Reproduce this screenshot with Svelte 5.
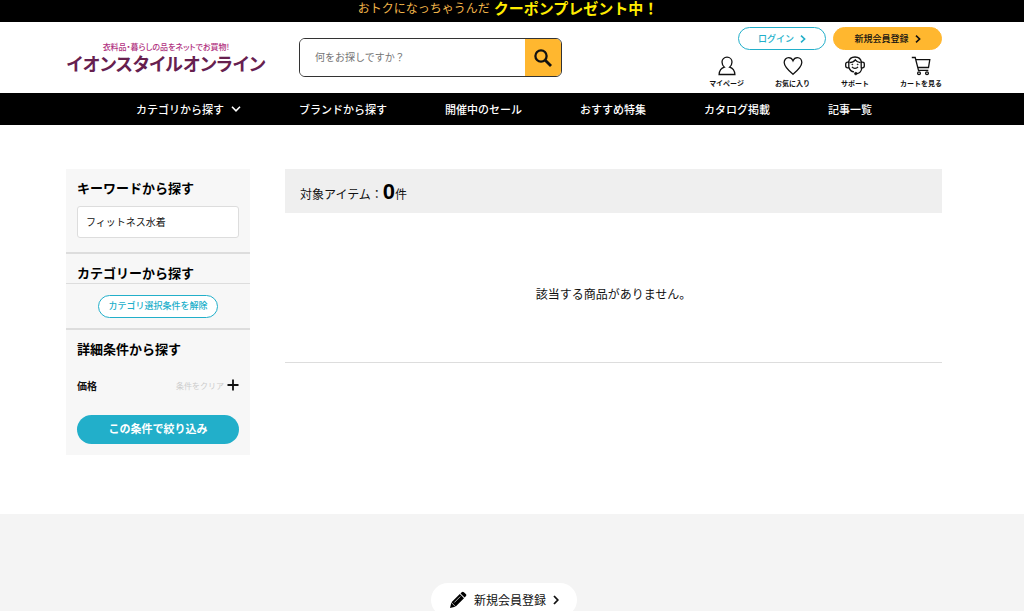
<script>
	const navItems = [
		{ label: 'カテゴリから探す', arrow: true },
		{ label: 'ブランドから探す' },
		{ label: '開催中のセール' },
		{ label: 'おすすめ特集' },
		{ label: 'カタログ掲載' },
		{ label: '記事一覧' }
	];

	let query = '';
	let keyword = 'フィットネス水着';
	let count = 0;
</script>

<a class="promo" href="/coupon">
	<span>おトクになっちゃうんだ</span>
	<strong>クーポンプレゼント中！</strong>
</a>

<header>
	<div class="container header-inner">
		<a class="logo" href="/">
			<small>衣料品・暮らしの品をネットでお買物!</small>
			<span>イオンスタイルオンライン</span>
		</a>
		<form class="search" on:submit|preventDefault>
			<input type="text" placeholder="何をお探しですか？" aria-label="何をお探しですか？" bind:value={query} />
			<button type="submit" aria-label="検索">
				<svg width="18" height="18" viewBox="0 0 18 18" fill="none" stroke="#000">
					<circle cx="7" cy="7" r="5.6" stroke-width="2.3" />
					<path d="M11 11l6 6" stroke-width="2.8" />
				</svg>
			</button>
		</form>
		<div class="account">
			<div class="account-buttons">
				<a class="login" href="/login">
					ログイン
					<svg width="6" height="8" viewBox="0 0 6 8"><path d="M1 .7L4.6 4 1 7.3" /></svg>
				</a>
				<a class="signup" href="/signup">
					新規会員登録
					<svg width="6" height="8" viewBox="0 0 6 8"><path d="M1 .7L4.6 4 1 7.3" /></svg>
				</a>
			</div>
			<div class="shortcuts">
				<a href="/mypage">
					<svg width="20" height="20" viewBox="0 0 20 20">
						<path d="M7.400 11.200C5.700 9.800 5 8 5 6.100 5 3.300 7.100 1.200 10 1.200s5 2.100 5 4.900c0 1.900-.7 3.700-2.400 5.100 3 .9 5 3.100 5.300 7.300H2.100c.3-4.200 2.300-6.400 5.300-7.300z" />
					</svg>
					マイページ
				</a>
				<a href="/favorite">
					<svg width="20" height="20" viewBox="0 0 20 20">
						<path d="M10 18.300C5.500 14.500 1.200 10.700 1.200 6.500c0-2.900 2-4.900 4.400-4.900 2 0 3.600 1.200 4.400 3.100.8-1.900 2.400-3.100 4.400-3.100 2.400 0 4.400 2 4.400 4.900 0 4.200-4.300 8-8.800 11.800z" />
					</svg>
					お気に入り
				</a>
				<a href="/support">
					<svg width="20" height="20" viewBox="0 0 20 20">
						<path d="M3.500 6.500C4 3.200 6.500 1 10 1s6 2.200 6.500 5.500" />
						<path d="M3.800 6.200H2.600C1.500 6.200.7 7 .7 8v2c0 1 .8 1.800 1.900 1.800h1.200zM16.200 6.200h1.200c1.100 0 1.900.8 1.900 1.800v2c0 1-.8 1.800-1.900 1.800h-1.200z" />
						<path d="M4 11.500c.7 2.400 2.700 4.200 5 4.400M16.800 12c-.3 3-2 5.200-4.800 5.600M4.500 6.600C7.300 6.500 9.200 5.500 10.300 3.800c1.200 1.700 2.900 2.600 5.200 2.800M7 10.900c1.500 2 4.500 2 6 0" />
						<circle class="dot" cx="10.800" cy="17.600" r="1.300" />
						<circle class="dot" cx="7.300" cy="8.400" r=".5" />
						<circle class="dot" cx="12.700" cy="8.400" r=".5" />
					</svg>
					サポート
				</a>
				<a href="/cart">
					<svg width="20" height="20" viewBox="0 0 20 20">
						<path d="M.8 1.500h3.400l3.300 12.800h9.800M4.800 3.600h14L17.500 11.500H6.800" />
						<circle cx="8" cy="17.200" r="1.400" />
						<circle cx="16" cy="17.200" r="1.400" />
					</svg>
					カートを見る
				</a>
			</div>
		</div>
	</div>
</header>

<nav>
	{#each navItems as item}
		<a href="/">
			{item.label}
			{#if item.arrow}
				<svg width="10" height="6" viewBox="0 0 10 6"><path d="M1 .8l4 4 4-4" /></svg>
			{/if}
		</a>
	{/each}
</nav>

<div class="page">
	<div class="container columns">
		<aside>
			<section class="keyword">
				<h2><label for="keyword">キーワードから探す</label></h2>
				<input id="keyword" type="text" bind:value={keyword} />
			</section>
			<section class="category">
				<h2>カテゴリーから探す</h2>
				<div class="reset">
					<button type="button">カテゴリ選択条件を解除</button>
				</div>
			</section>
			<section class="detail">
				<h2>詳細条件から探す</h2>
				<div class="price">
					<h3>価格</h3>
					<button class="clear" type="button">条件をクリア</button>
					<button class="toggle" type="button" aria-label="価格を開く">
						<svg width="12" height="12" viewBox="0 0 12 12"><path d="M6 .5v11M.5 6h11" /></svg>
					</button>
				</div>
				<button class="apply" type="button">この条件で絞り込み</button>
			</section>
		</aside>
		<main>
			<p class="count">対象アイテム：<b>{count}</b>件</p>
			<p class="empty">該当する商品がありません。</p>
		</main>
	</div>
</div>

<footer>
	<a href="/signup">
		<svg class="pencil" width="18" height="18" viewBox="0 0 18 18">
			<path d="M1 17l1.300-5.300 4 4zM2.500 11.300l8.300-8.300 4.200 4.200-8.300 8.300zM11.500 2.400l1.200-1.200c.7-.7 1.500-.7 2.200 0L16.800 3c.7.7.7 1.500 0 2.200l-1.200 1.200z" />
			<path class="shine" d="M5.300 11.500l6-6" />
		</svg>
		新規会員登録
		<svg class="arrow" width="6" height="10" viewBox="0 0 6 10"><path d="M1 1l3.800 4L1 9" /></svg>
	</a>
</footer>

<style>
	:global(body) {
		background: #fff;
		color: #111;
		font-family: 'Noto Sans CJK JP', 'Noto Sans', sans-serif;
		font-size: 12px;
	}

	a {
		color: inherit;
		text-decoration: none;
	}

	h2,
	h3,
	p {
		margin: 0;
	}

	input,
	button {
		box-sizing: border-box;
		margin: 0;
		padding: 0;
		border: 0;
		font-family: inherit;
		color: inherit;
		outline: none;
	}

	button {
		cursor: pointer;
	}

	svg {
		flex: none;
		fill: none;
		stroke: currentColor;
	}

	header,
	nav,
	.page,
	footer {
		padding-right: 16px;
	}

	.container {
		max-width: 876px;
		margin: 0 auto;
	}

	.promo {
		display: flex;
		justify-content: center;
		align-items: center;
		gap: 4px;
		padding: 0 8px 6px 0;
		background: #000;
		color: #f0b54a;
		line-height: 16px;
	}

	.promo strong {
		color: #ffec00;
		font-size: 15px;
	}

	.header-inner {
		display: flex;
		align-items: flex-start;
		padding: 5px 0 4px;
	}

	.logo {
		display: flex;
		flex-direction: column;
		align-items: center;
		width: 200px;
		margin: 14px 33px 0 0;
		font-weight: 700;
		font-feature-settings: 'palt';
		white-space: nowrap;
	}

	.logo small {
		color: #b0307e;
		font-size: 8px;
		font-weight: 500;
		line-height: 12px;
	}

	.logo span {
		color: #66204f;
		font-size: 18px;
		line-height: 20px;
	}

	.search {
		display: flex;
		box-sizing: border-box;
		width: 263px;
		height: 39px;
		margin-top: 11px;
		border: 1px solid #333;
		border-radius: 6px;
		overflow: hidden;
	}

	.search input {
		flex: 1;
		min-width: 0;
		padding: 0 0 2px 15px;
		font-size: 10px;
	}

	.search input::placeholder {
		color: #757575;
	}

	.search button {
		display: flex;
		align-items: center;
		justify-content: center;
		width: 36px;
		background: #ffb72f;
	}

	.account {
		margin-left: auto;
	}

	.account-buttons {
		display: flex;
		justify-content: flex-end;
		gap: 7px;
	}

	.account-buttons a {
		display: flex;
		align-items: center;
		justify-content: center;
		gap: 6px;
		box-sizing: border-box;
		height: 23px;
		border: 1px solid #22afca;
		border-radius: 12px;
		font-size: 9px;
		font-weight: 500;
	}

	.account-buttons svg {
		stroke-width: 1.6;
	}

	.login {
		width: 88px;
		color: #22afca;
	}

	.account-buttons .signup {
		width: 109px;
		border-color: #ffb72f;
		background: #ffb72f;
	}

	.shortcuts {
		display: flex;
		justify-content: flex-end;
		gap: 31px;
		margin-top: 6px;
	}

	.shortcuts a {
		display: flex;
		flex-direction: column;
		align-items: center;
		gap: 1px;
		font-size: 7px;
		font-weight: 700;
		line-height: 12px;
	}

	.shortcuts svg {
		stroke-width: 1.3;
	}

	.shortcuts .dot {
		fill: currentColor;
		stroke-width: 0.6;
	}

	nav {
		display: flex;
		justify-content: center;
		gap: 58px;
		background: #000;
		color: #fff;
		font-size: 11px;
		font-weight: 500;
		line-height: 32px;
	}

	nav a {
		display: flex;
		align-items: center;
		gap: 7px;
	}

	nav svg {
		stroke-width: 1.6;
	}

	.columns {
		display: flex;
		align-items: flex-start;
		gap: 35px;
		padding: 44px 0 59px;
	}

	aside {
		width: 184px;
		background: #f7f7f7;
	}

	h2 {
		color: #000;
		font-size: 13px;
		font-weight: 700;
		line-height: 20px;
	}

	.keyword {
		padding: 9px 11px 14px;
	}

	.keyword input {
		width: 100%;
		height: 32px;
		margin-top: 8px;
		padding: 0 8px 2px;
		border: 1px solid #ddd;
		border-radius: 3px;
		background: #fff;
		font-size: 10px;
	}

	.category {
		border-top: 2px solid #ddd;
	}

	.category h2 {
		padding: 9px 11px 0;
		border-bottom: 1px solid #ddd;
	}

	.reset {
		padding: 11px 0 10px;
	}

	.reset button {
		display: block;
		height: 23px;
		margin: 0 auto;
		padding: 0 9px 2px;
		border: 1px solid #22afca;
		border-radius: 12px;
		background: #fff;
		color: #22afca;
		font-size: 9px;
		font-weight: 500;
	}

	.detail {
		padding: 9px 11px 11px;
		border-top: 2px solid #ddd;
	}

	.price {
		display: flex;
		align-items: center;
		height: 20px;
		margin: 16px 0 20px;
	}

	h3 {
		flex: 1;
		font-size: 10px;
		font-weight: 700;
	}

	.clear {
		background: none;
		color: #ccc;
		font-size: 8px;
	}

	.toggle {
		display: flex;
		margin-left: 3px;
		background: none;
	}

	.toggle svg {
		stroke-width: 1.8;
	}

	.apply {
		width: 100%;
		height: 29px;
		padding-bottom: 3px;
		border-radius: 15px;
		background: #22afca;
		color: #fff;
		font-size: 11px;
		font-weight: 700;
	}

	main {
		flex: 1;
	}

	.count {
		padding: 10px 15px 4px;
		background: #efefef;
		line-height: 30px;
	}

	.count b {
		color: #000;
		font-family: 'Liberation Sans', Arial, sans-serif;
		font-size: 22px;
		line-height: 1;
	}

	.empty {
		padding: 71px 0 58px;
		border-bottom: 1px solid #ddd;
		line-height: 20px;
		text-align: center;
	}

	footer {
		display: flex;
		justify-content: center;
		padding-top: 69px;
		padding-bottom: 60px;
		background: #f4f4f4;
	}

	footer a {
		display: flex;
		align-items: center;
		gap: 7px;
		padding: 0 18px;
		border-radius: 18px;
		background: #fff;
		line-height: 34px;
	}

	.pencil {
		fill: #000;
		stroke: none;
	}

	.pencil .shine {
		stroke: #fff;
		stroke-width: 0.7;
	}

	.arrow {
		stroke-width: 1.8;
	}
</style>
